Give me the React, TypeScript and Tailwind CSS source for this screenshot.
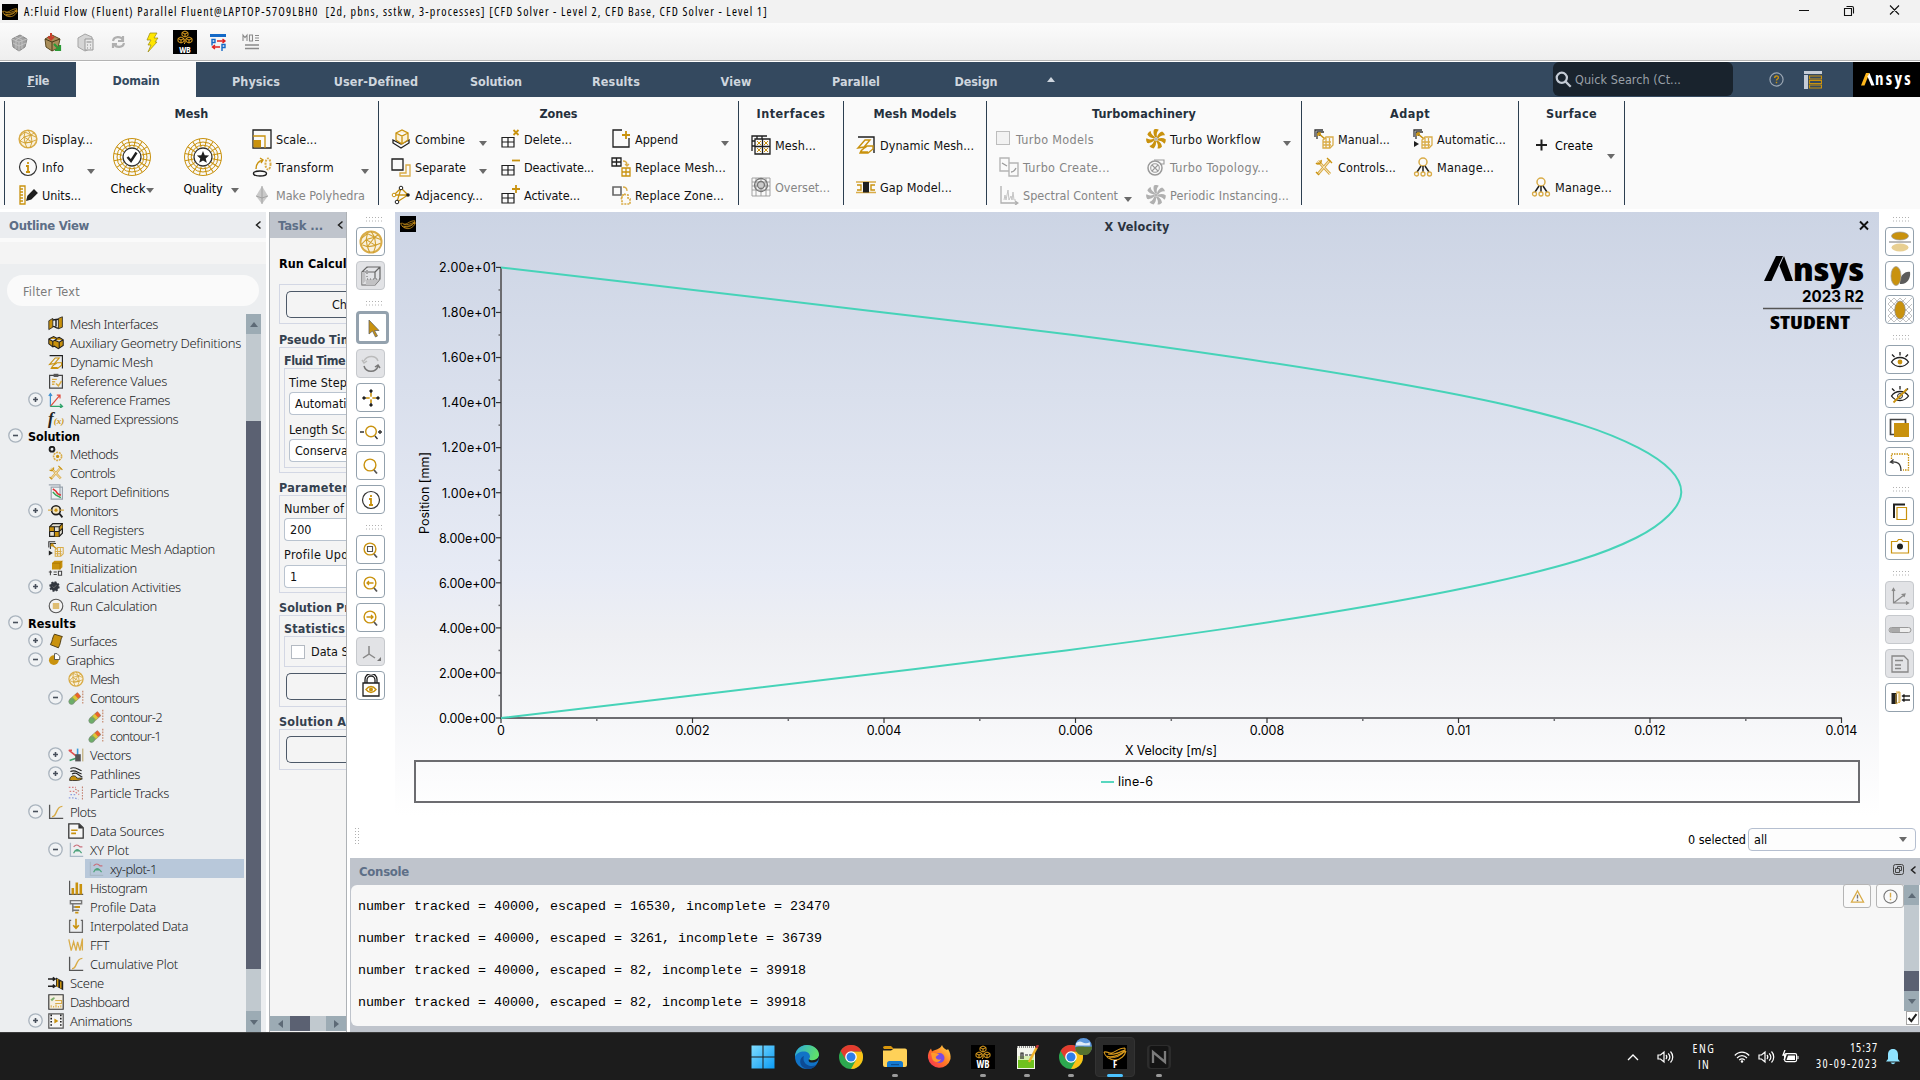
import React, { useLayoutEffect, useRef } from "react";

const G = "#c9920e";
const L = "#d9ac48";
const K = "#1f1f1f";

const fontUi = "font-['DejaVu_Sans_Condensed','DejaVu_Sans',sans-serif] [font-stretch:condensed]";

/* Text whose tracking is adjusted so that it spans a fixed width. */
function T({ children, w, className = "" }: { children: string; w?: number; className?: string }) {
  const ref = useRef<HTMLSpanElement>(null);
  useLayoutEffect(() => {
    const el = ref.current;
    if (!el || !w) return;
    el.style.letterSpacing = "0px";
    const natural = el.getBoundingClientRect().width;
    el.style.letterSpacing = (w - natural) / children.length + "px";
  }, [children, w]);
  return (
    <span ref={ref} className={"inline-block whitespace-pre " + className}>
      {children}
    </span>
  );
}

const P = (d: string, stroke = K, fill = "none", sw = 1.3) => (
  <path d={d} stroke={stroke} fill={fill} strokeWidth={sw} />
);

const grid4 = P("M2 8.500h12v9.500H2zM8 8.500v9.500M2 13h12", K, "none", 1.2);
const adaptMesh = (
  <>
    {P("M1 8V1h8M3 10V3h7M5 6h2", "#333", "none", 1.3)}
    {P("M4 4l7 6M4 4v3M4 4h3", G, "none", 1.6)}
    {P("M9 11l3-3h7v8l-3 3H9zM9 13h8M9 16h8M12 9v10M15.500 9v10", L, "none", 1.3)}
  </>
);
const meshBall = (
  <>
    <circle cx="10" cy="10" r="8.8" fill="#f9f1de" stroke={L} strokeWidth="1.6" />
    {P("M2 7l5-4 6 3 5 2M2 12l5 2 6-1 5-2M7 3l-1 5-4 4M6 8l7-2 1 7-7 1zM7 14l2 5M14 13l-2 6M6 8l8 5M13 6l3-2M10 1l3 5M7 14l6-8", "#d09f2c", "none", 0.9)}
  </>
);
const tools = (
  <>
    {P("M4 4l12 13M16 3L4 17", L, "none", 2.8)}
    {P("M4 4l12 13M16 3L4 17", "#fbf4e2", "none", 0.9)}
    {P("M2 6a3 3 0 0 0 5-3M13 1l5 5M2 15l3 3", G, "none", 1.4)}
  </>
);
const dynMesh = (
  <>
    {P("M2 2h16v16", K, "none", 1.4)}
    {P("M2 13l7-8h5l-6 7zM4 18c2-5 4-4 7-7h6v3l-5 4zM4 17h8", G, "none", 1.4)}
  </>
);
const contour = (
  <>
    {P("M4.500 14L14 5.500", "#8a8a8a", "none", 7.500)}
    {P("M5 13.500L9 10", "#8fb84a", "none", 6.500)}
    {P("M8 11L11 8", "#dcc638", "none", 6.500)}
    {P("M10.500 8.500L14 5.500", "#e8632c", "none", 6)}
    <circle cx="4.500" cy="14.500" r="3.500" fill="#6cae68" stroke="#7a8a7a" strokeWidth=".8" />
    <path d="M18.500 1v17" stroke="#c07a5a" strokeWidth="1.300" strokeDasharray="2 1.500" />
  </>
);
const xy = (
  <>
    {P("M3 1v17h16", "#a9b9c6", "none", 1.6)}
    {P("M7 6c3-3 5-3 8 0h3", "#c96f7b", "none", 1.5)}
    {P("M7 14c3-6 6-6 10 0M8 11h7", "#4fa37c", "none", 1.5)}
  </>
);
const curve = (
  <>
    {P("M2 1v17h17", "#555", "none", 1.6)}
    {P("M5 16c7 0 4-13 13-13", L, "none", 1.8)}
  </>
);
const manage = (
  <>
    <circle cx="10" cy="5" r="4" fill="none" stroke={L} strokeWidth="1.5" />
    {P("M8 9l-4 6M10 9v6M12 9l4 6", K, "none", 1.5)}
    <circle cx="3.500" cy="17" r="2" fill="none" stroke={L} strokeWidth="1.3" />
    <circle cx="10" cy="17" r="2" fill="none" stroke={L} strokeWidth="1.3" />
    <circle cx="16.500" cy="17" r="2" fill="none" stroke={L} strokeWidth="1.3" />
  </>
);
const fan = (c: string) => (
  <>
    {[0, 51, 103, 154, 206, 257, 309].map((a) => (
      <path key={a} d="M9.500 8.500C7.500 6 7 3 8 .5c2-.7 3.800-.5 4.800.3C10.500 3 10.500 6 11 8z" fill={c} transform={`rotate(${a} 10 10)`} />
    ))}
    <circle cx="10" cy="10" r="1.800" fill="#b5b5b5" />
  </>
);
const mag = (
  <>
    <circle cx="9" cy="9" r="5.900" fill="none" stroke={G} strokeWidth="1.4" />
    {P("M13 14l3 3.500", "#555", "none", 1.8)}
  </>
);
const info = (
  <>
    <circle cx="10" cy="10" r="8.500" fill="none" stroke="#333" strokeWidth="1.2" />
    {P("M8 9h2v6M8 15h4M10 5v2", G, "none", 1.8)}
  </>
);

const icons: Record<string, React.ReactNode> = {
  ball: meshBall,
  info,
  units: (
    <>
      {P("M2 1h5v18H2zM2 4h3M2 7h3M2 10h3M2 13h3M2 16h3", G)}
      {P("M9 15l1-4 6-6 3 3-6 6z", K, K)}
    </>
  ),
  scale: (
    <>
      {P("M1 1h18v18H1z", K)}
      {P("M1 7h12v12", G)}
      <path d="M1.500 11H9v7.500H1.500z" fill={G} />
    </>
  ),
  transform: (
    <>
      <ellipse cx="8" cy="16.500" rx="6.500" ry="2.500" fill="none" stroke={K} strokeWidth="1.4" />
      {P("M4 12c0-5 2-8 7-9M8 1l3 2-2 3", G, "none", 1.4)}
      <ellipse cx="16" cy="7" rx="2.500" ry="5.500" fill="none" stroke={L} strokeWidth="2" strokeDasharray="2 1" />
    </>
  ),
  poly: (
    <>
      <path d="M10 1l6 10-6 8-6-8z" fill="#c9c9c9" />
      {P("M10 1v18M4 11l6 2 6-2", "#999", "none", 0.8)}
    </>
  ),
  combine: (
    <>
      {P("M2 11l8 4 8-4v3l-8 5-8-5z", K)}
      {P("M5 4l6-3 6 3v7l-6 4-6-4zM5 4l6 3 6-3M11 7v8", G, "#fbf1d8")}
    </>
  ),
  separate: (
    <>
      {P("M1 2h11v11H1z", K)}
      {P("M15 8h4v11H9v-3h6z", L)}
    </>
  ),
  adjacency: (
    <>
      {P("M10 3L6 17M3 10h14M10 3l7 7-11 7M3 10l7-7", G)}
      <circle cx="10" cy="3" r="1.800" fill="#fff" stroke={K} />
      <circle cx="6" cy="17" r="1.800" fill="#fff" stroke={K} />
      <circle cx="17" cy="10" r="1.800" fill={K} />
      <circle cx="3" cy="10" r="1.800" fill="#fff" stroke={G} />
    </>
  ),
  del: <>{grid4}{P("M13.500 1l5 5M18.500 1l-5 5", G, "none", 1.8)}</>,
  deact: <>{grid4}{P("M12 3.500h8", G, "none", 1.8)}</>,
  act: <>{grid4}{P("M12 4h8M16 0v8", G, "none", 1.8)}</>,
  append: <>{P("M11 1H2v17h16V9", K)}{P("M11 6h8M15 2v8", G, "none", 1.8)}</>,
  repmesh: (
    <>
      {P("M1 1h9v8H1zM5.500 1v8M1 5h9", K)}
      {P("M11 11h8v8h-8zM11 15h8M15 11v8", G)}
      {P("M12 4c3 0 4 2 4 4M14 7l2 2 2-2", L)}
    </>
  ),
  repzone: (
    <>
      {P("M2 2h8v8H2z", "#666", "none", 1.6)}
      <path d="M10 12h2v-3l5 1v3l2 1v5h-8v-4z" fill="none" stroke={L} strokeWidth="1.7" strokeDasharray="2 1" />
      {P("M12 2c3 0 4 2 4 4", L)}
    </>
  ),
  imesh: (
    <>
      {P("M1 16V1h15M1 6h3M1 11h3M6 1v3M11 1v3M4 4h15v15H4zM11.500 4v15M4 11.500h15", K)}
      {P("M6 6l4 4M10 6l-4 4M13 6l4 4M17 6l-4 4M6 13l4 4M10 13l-4 4M13 13l4 4M17 13l-4 4", G, "none", 1)}
    </>
  ),
  overset: (
    <>
      {P("M1 1h18v18H1zM1 5h18M1 9h18M1 13h18M5 1v18M10 1v18M15 1v18", "#999", "none", 0.9)}
      <circle cx="10" cy="8" r="6.500" fill="none" stroke="#777" strokeWidth="1.3" />
      <circle cx="10" cy="8" r="3.500" fill="#ccc" stroke="#777" strokeWidth="1.3" />
    </>
  ),
  dyn: dynMesh,
  gap: (
    <>
      {P("M0 5h20M0 15.500h20", L, "none", 1.5)}
      {P("M1 8h4v5H1M19 8h-4v5h4", G, "none", 1.4)}
      <path d="M7 5h6v10.500H7z" fill={K} />
    </>
  ),
  tcreate: (
    <>
      {P("M1 1h9v13H1zM10 6h9v13h-9z", "#b5b5b5", "none", 1.4)}
      {P("M3 6l5 3M12 15c2 0 4-2 5-4", "#999")}
    </>
  ),
  spectral: <>{P("M2 1v17h17M16 16l3 2-3 2", "#b0b0b0")}{P("M5 15l1-5 1 5 2-10 1 10 2-4 1 4 1-8 1 8h2", "#c4c4c4", "none", 1)}</>,
  fan: fan(G),
  fanoff: fan("#b0b0b0"),
  topo: (
    <>
      <circle cx="9" cy="11" r="7" fill="none" stroke="#999" strokeWidth="1.5" />
      <circle cx="9" cy="11" r="4.300" fill="none" stroke="#999" strokeWidth="1.1" />
      {P("M6 8l6 6M12 8l-6 6M8 3h10v4h-4", "#999", "none", 1.1)}
    </>
  ),
  manual: adaptMesh,
  auto: <>{adaptMesh}<path d="M1 12l5 3-5 3z" fill={K} /></>,
  tools,
  manage,
  plus: P("M5 10h11M10.500 4.500v11", K, "none", 2),
  mi: (
    <>
      <path d="M1 6l5-3v11l-5 3zM13 3l5-2v13l-5 2z" fill={G} stroke={K} />
      {P("M6 5c4 0 4-1 7-1M6 13c4 0 4 3 7 2M10 5v8", K, "#8b6a1f", 1.8)}
    </>
  ),
  aux: <path d="M1 5l6-3 4 2 3-1 5 3v7l-6 4-5-3-2 1-5-4zM1 5l5 3 5-3M6 8v7M9 7l5 2 5-3M14 9v8" fill={G} stroke={K} strokeWidth="1.3" />,
  refv: (
    <>
      {P("M2 3h16v16H2z", "#444", "none", 1.5)}
      <path d="M7 1h6v4H7z" fill="#555" />
      {P("M5 8h6M5 11h4M5 14h3M10 13l3 3 4-6", L, "none", 1.8)}
    </>
  ),
  frames: (
    <>
      {P("M3 18V2M1 5l2-3 2 3", "#3b8fd0", "none", 1.5)}
      {P("M3 18L15 4M11 4h4v4", "#e04b3c", "none", 1.5)}
      {P("M3 18h15M15 15l3 3-3 2", "#2fa36a", "none", 1.7)}
    </>
  ),
  methods: (
    <>
      <circle cx="5" cy="4" r="3" fill="none" stroke={K} strokeWidth="2.4" />
      <circle cx="12" cy="13" r="5" fill="none" stroke={L} strokeWidth="2" strokeDasharray="2.500 1" />
      <circle cx="12" cy="13" r="2" fill={G} />
    </>
  ),
  report: (
    <>
      {P("M1 1h14v14M4 4h14v15H4z", "#9aa4ae", "#eef2f4", 1.5)}
      {P("M6 6l4 3 2 3 4 2", "#e03030", "none", 2)}
      {P("M6 10l4 4 6 3", "#35a355", "none", 1.8)}
    </>
  ),
  monitors: (
    <>
      <circle cx="10" cy="9" r="5.500" fill="#f3e6c4" stroke={K} strokeWidth="2" />
      {P("M14 13l4 5", K, "none", 2.2)}
      {P("M0 9h5M15 9h5", L, "none", 1.5)}
      <circle cx="10" cy="9" r="2" fill={G} />
    </>
  ),
  cells: (
    <>
      <path d="M2 6l4-4h12v12l-4 4H2z" fill="#e4e0d2" stroke={K} strokeWidth="1.5" />
      <path d="M2 6h6v6H2zM8 12h6v6H8zM14 6l4-4v6l-4 4z" fill={G} />
      {P("M2 6h12v12M14 6l4-4M8 6v12M2 12h12l4-4", K)}
    </>
  ),
  init: (
    <>
      <path d="M5 4l3-3h10v8l-3 3H5z" fill={G} />
      {P("M5 4h10v8M15 4l3-3", "#a87400", "none", 1)}
      {P("M3 13v6M1 15h4M7 15h4M7 18h4M13 14h4v5h-4z", "#444")}
    </>
  ),
  gear: (
    <>
      <circle cx="10" cy="10" r="6.500" fill="#333840" stroke="#333840" strokeWidth="3" strokeDasharray="3 2" />
      {P("M7 10l2 2 4-4", "#777")}
    </>
  ),
  run: (
    <>
      <circle cx="10" cy="10" r="8.500" fill="#f3f3f3" stroke="#555" strokeWidth="1.4" />
      {P("M6 7.500h8M6 10h8M6 12.500h8", L, "none", 1.7)}
    </>
  ),
  surf: <path d="M8 1.500l10 3c-3 4-1 6-5 14l-10-4c3-5 2-8 5-13z" fill={G} stroke="#4c3a10" strokeWidth="1.2" />,
  graphics: (
    <>
      <circle cx="9" cy="11" r="7.500" fill={G} />
      <path d="M10 1h4l4 4v5h-8z" fill="#fff" stroke="#444" strokeWidth="1.3" />
    </>
  ),
  contour,
  vectors: (
    <>
      {P("M1 4l9 7M1 4l4 0", "#e05050", "none", 2)}
      {P("M12 11V2", "#3b9ad8", "none", 2)}
      {P("M2 17l8-3", "#3fa36a", "none", 2)}
      <path d="M9 9h7v9H9z" fill="#555" />
      {P("M18.500 2v16", "#b39a5a", "none", 1.2)}
    </>
  ),
  paths: (
    <>
      {P("M3 3c6-3 8 1 14 3M3 7c6-3 8 1 14 3M5 10c6-3 7 1 13 4", K, "none", 1.4)}
      <path d="M2 18c0-7 8-7 9-3 2 1 5-1 7 1-4 3-12 2-16 2z" fill={G} stroke={K} />
    </>
  ),
  tracks: (
    <>
      <path d="M1 3h9M2 8h6l6 4" fill="none" stroke="#d98080" strokeWidth="1.6" strokeDasharray="2 2" />
      <path d="M1 16h7l5 2M3 12h8" fill="none" stroke="#8f9fe0" strokeWidth="1.6" strokeDasharray="2 2" />
      <path d="M9 5l5 3M18 2v16" stroke="#c07a6a" strokeWidth="1.300" strokeDasharray="2 1.500" />
    </>
  ),
  curve,
  data: (
    <>
      {P("M1 1h13l5 5v13H1z", "#333", "#f6f6f6", 1.6)}
      <path d="M13 1l6 6h-6z" fill="#333" />
      {P("M4 9h8M4 13h6", G, "none", 2)}
    </>
  ),
  xy,
  hist: (
    <>
      {P("M2 1v17h17", "#555", "none", 1.5)}
      {P("M6 18v-8M11 18V3M16 18V5", G, "none", 3.2)}
    </>
  ),
  profile: (
    <>
      {P("M3 2h14v4H3zM6 6v10M6 10h8M6 14h8", "#777", "none", 1.8)}
      {P("M9 10h6M9 17h4", G, "none", 2.4)}
    </>
  ),
  interp: (
    <>
      {P("M4 3H2v15h16V3h-2", "#666", "none", 1.6)}
      {P("M10 1v11M6.500 9l3.500 4 3.500-4", G, "none", 2)}
    </>
  ),
  fft: P("M1 3l3 14 3-11 3 11 2-11 3 11 3-15v15", L, "none", 1.6),
  scene: (
    <>
      {P("M0 5h8M6 3l3 2-3 2M0 14h8M6 12l3 2-3 2", K, "none", 1.7)}
      <path d="M10 3l9 5v11l-9-5z" fill={K} />
      {P("M12 5v10M16 8v9", G, "none", 2)}
    </>
  ),
  dash: (
    <>
      {P("M1 1h18v18H1z", "#333", "#f4efe2", 1.4)}
      <path d="M3 7l4-3 2 1-4 4z" fill="#7fb06a" />
      {P("M4 17v-3M7 17v-2M10 17v-4M13 17v-2M16 17v-3M9 8h8v4H9", L)}
    </>
  ),
  anim: (
    <>
      {P("M1 1h18v18H1z", "#555", "#f6f6f6", 1.5)}
      <path d="M4 2v16M16 2v16" stroke={K} strokeWidth="2" strokeDasharray="2 2" />
      <path d="M8 7l5 3-5 3z" fill={G} />
    </>
  ),
};

function Ico({ n, s = 20 }: { n: string; s?: number }) {
  return (
    <svg viewBox="0 0 20 20" width={s} height={s} className="shrink-0">
      {icons[n]}
    </svg>
  );
}

const Fx = () => (
  <span className="flex w-4 items-baseline text-[17px] leading-none italic font-bold font-['Liberation_Serif',serif] text-[#222]">
    f<span className="text-[9px] text-[#c9920e]">(x)</span>
  </span>
);

function Arrow({ className = "" }: { className?: string }) {
  return (
    <svg viewBox="0 0 8 5" width="8" height="5" className={"shrink-0 " + className}>
      <path d="M0 0h8L4 5z" fill="#6a6a6a" />
    </svg>
  );
}

function Item({ i, t, w, off, arrow }: { i: string; t: string; w: number; off?: boolean; arrow?: boolean }) {
  return (
    <div className={"flex h-7 items-center gap-1 pr-1.5" + (off ? " text-[#858585]" : " text-[#111]")}>
      <Ico n={i} />
      <T w={w}>{t}</T>
      {arrow && <Arrow className="ml-auto mt-2" />}
    </div>
  );
}

function Group({ title, tw, cls, children }: { title: string; tw: number; cls: string; children: React.ReactNode }) {
  return (
    <div className={"flex h-[104px] shrink-0 flex-col border-l border-[#2c3e50] " + cls}>
      <div className="flex h-6 shrink-0 items-center justify-center font-bold text-[#25303c]">
        <T w={tw}>{title}</T>
      </div>
      <div className="flex">{children}</div>
    </div>
  );
}

function Wheel({ star }: { star?: boolean }) {
  return (
    <svg viewBox="0 0 40 40" width="40" height="40" className="shrink-0">
      <g fill="none" stroke={G} strokeWidth="1">
        <circle cx="20" cy="20" r="18.500" />
        <circle cx="20" cy="20" r="15" />
        <circle cx="20" cy="20" r="11.800" />
        {Array.from({ length: 16 }, (_, k) => (
          <path key={k} d="M20 10.500V1.500" transform={`rotate(${k * 22.5 + 11} 20 20)`} />
        ))}
      </g>
      <circle cx="20" cy="20" r="9" fill="#fff" stroke="#333" strokeWidth="1.300" />
      {star ? (
        <path d="M20 14l1.700 4.200 4.400.3-3.400 2.900 1.100 4.400-3.800-2.400-3.800 2.400 1.100-4.400-3.400-2.900 4.400-.3z" fill={K} />
      ) : (
        <path d="M15.500 20l3.500 4 5.500-8.500" fill="none" stroke={K} strokeWidth="2.400" />
      )}
    </svg>
  );
}

function Swirl({ s, f }: { s: number; f?: boolean }) {
  return (
    <svg viewBox="0 0 24 24" width={s} height={s} className="bg-black shrink-0">
      <g fill="none" stroke="#d99a1c" strokeWidth="1.100" transform={f ? "translate(0 0)" : "translate(0 4)"}>
        <path d="M1 7c4-1 5 2 8 1s7-5 13-5M1 7c1 5 6 8 11 8 6 0 10-5 11-9M3 11c6 2 12 0 19-5M5 9c6 1 10-1 17-4M6 13c5 0 11-1 16-7M22 3v5" />
      </g>
    </svg>
  );
}

function Cubes() {
  return (
    <g fill="none" stroke="#e2a11f" strokeWidth="1">
      <path d="M12 1l3 1.500v3L12 7 9 5.500v-3zM9 2.500L12 4l3-1.500M12 4v3M8 7l3 1.500v3L8 13l-3-1.500v-3zM5 8.500L8 10l3-1.500M8 10v3M16 7l3 1.500v3L16 13l-3-1.500v-3zM13 8.500l3 1.500 3-1.500M16 10v3M12 9v4l-1 1" />
    </g>
  );
}

function TopBar() {
  return (
    <>
      <div className="flex h-[23px] items-center bg-[#f2f2f2] pl-0.5 text-[12px] text-black font-['Open_Sans','Noto_Sans',sans-serif]">
        <Swirl s={16} />
        <T w={744} className="ml-1.5 mt-px">A:Fluid Flow (Fluent) Parallel Fluent@LAPTOP-57O9LBH0  [2d, pbns, sstkw, 3-processes] [CFD Solver - Level 2, CFD Base, CFD Solver - Level 1]</T>
        <svg viewBox="0 0 110 12" width="110" height="12" className="-mt-1 ml-auto mr-[15px]" fill="none" stroke="#111" strokeWidth="1.100">
          <path d="M4 6.500h10M49.500 4.500h7v7h-7zM51.500 2.500h5.500q1.500 0 1.500 1.500v5.500M95 1.500l9 9M104 1.500l-9 9" />
        </svg>
      </div>
      <div className="flex h-[39px] items-center gap-[9px] border-b border-white bg-gradient-to-b from-[#fbfbfb] to-[#eeeeee] pl-[8px] shadow-[inset_0_-1px_0_#b4b4b4]">
        <svg viewBox="0 0 24 24" width="24" height="24">
          <path d="M4 9l8-4 7 4-2 8-6 4-6-4z" fill="#a2a2a2" stroke="#888" />
          <path d="M4 9l7 3 8-3M11 12v9M7 7l7 3v9M15 6l-7 4v9M5 13l6 3 7-3" stroke="#c9c9c9" strokeWidth=".8" fill="none" />
        </svg>
        <svg viewBox="0 0 24 24" width="24" height="24">
          <path d="M4 9l7-4 8 4-2 9-6 3-6-4z" fill="#a98e5a" stroke="#5c4a22" />
          <path d="M4 9l7 3 8-3M11 12v9" stroke="#4b3b18" fill="none" />
          <path d="M10 3v6M7 6.500l3 3 3-3" stroke="#c8402c" strokeWidth="2" fill="none" />
          <path d="M13 14l5 5M19 15v5h-5" stroke="#2b9a35" strokeWidth="2.200" fill="none" />
        </svg>
        <svg viewBox="0 0 24 24" width="24" height="24">
          <path d="M4 8l7-4 7 3v11l-7 3-7-4z" fill="#d5d5d5" stroke="#a5a5a5" />
          <path d="M11 9h8v11h-8z" fill="#e8e8e8" stroke="#999" />
          <path d="M12.500 12h5M13 15h1M16 15h1M13 18h1M16 18h1" stroke="#888" />
        </svg>
        <svg viewBox="0 0 24 24" width="24" height="24" fill="none" stroke="#b0b0b0" strokeWidth="2.200">
          <path d="M6 11c1-5 8-5 10-1M16 6v5h-5M17 13c-1 5-8 5-10 1M6 18v-4h4" />
        </svg>
        <svg viewBox="0 0 24 24" width="24" height="24">
          <path d="M10 3h7l-3 5h4l-3 4h2l-9 10 3-7H8l3-5H7z" fill="#ffe600" stroke="#9a8a10" strokeWidth=".7" />
        </svg>
        <div className="flex h-6 w-6 flex-col items-center bg-black">
          <svg viewBox="2 0 20 15" width="22" height="15"><Cubes /></svg>
          <span className="text-[9px] font-bold leading-[9px] text-white font-['Open_Sans',sans-serif]">WB</span>
        </div>
        <svg viewBox="0 0 24 24" width="24" height="24">
          <path d="M4 4h16v3H4z" fill="#1469c7" />
          <path d="M6 15.500V9.500h3v3H6M16 21v-6.500h3v3h-3" stroke="#1469c7" strokeWidth="1.400" fill="none" />
          <path d="M11 11h8M16.500 9l2.500 2-2.500 2M14 17H7M9 15l-2.500 2L9 19" stroke="#e02020" strokeWidth="1.400" fill="none" />
        </svg>
        <svg viewBox="0 0 24 24" width="24" height="24" fill="none" stroke="#8a8a8a" strokeWidth="1.100">
          <path d="M4 11V5l2 2.500L8 5v6M10.500 5h3v6h-3zM16 5.500h4M16 8h4M16 10.500h4" />
          <path d="M6 15h14M6 18.500h14" strokeWidth="1.700" />
        </svg>
      </div>
    </>
  );
}

function Tabs() {
  const tabs: [string, number][] = [["Physics", 48], ["User-Defined", 84], ["Solution", 52], ["Results", 48], ["View", 31], ["Parallel", 48], ["Design", 43]];
  return (
    <div className="flex h-[35px] bg-[#34495f] text-[12.500px] font-bold text-[#cfd6de]">
      <div className="flex w-[76px] items-center justify-center pt-px">
        <span className="flex"><span className="underline">F</span><T w={14}>ile</T></span>
      </div>
      <div className="flex w-[120px] items-center justify-center bg-[#fafafa] pt-px text-[#34495f]"><T w={47}>Domain</T></div>
      {tabs.map(([t, w]) => (
        <div key={t} className="flex w-[120px] items-center justify-center pt-[3px]"><T w={w}>{t}</T></div>
      ))}
      <svg viewBox="0 0 8 5" width="8" height="5" className="ml-[11px] mt-[15px]"><path d="M0 5h8L4 0z" fill="#cfd6de" /></svg>
      <div className="ml-auto flex h-[34px] w-[180px] items-center gap-[3px] rounded-md bg-[#19232d] pl-0.5 font-normal text-[#99a0a8]">
        <svg viewBox="0 0 20 20" width="17" height="17" fill="none" stroke="#c5ccd6" strokeWidth="2.600"><circle cx="8" cy="8" r="6" /><path d="M12.500 12.500l6 6" /></svg>
        <T w={106} className="mt-px">Quick Search (Ct...</T>
      </div>
      <div className="flex w-[120px] items-center pl-[36px]">
        <svg viewBox="0 0 16 16" width="15" height="15"><circle cx="8" cy="8" r="7" fill="none" stroke="#9aa6b3" strokeWidth="1.300" /><path d="M6 6.500c0-3 4-3 4-.5 0 1.500-2 1.500-2 3M8 10.500v1.500" stroke={G} strokeWidth="1.500" fill="none" /></svg>
        <svg viewBox="0 0 18 18" width="18" height="18" className="ml-[20px]" fill="none"><path d="M0 1.500h18" stroke="#c5ccd6" strokeWidth="3" /><path d="M2 4v14" stroke="#c5ccd6" strokeWidth="4" /><path d="M5.500 5h12v3h-12zM5.500 9.500h12v3h-12zM5.500 14h12v3h-12z" stroke={G} strokeWidth="1.200" /></svg>
      </div>
      <div className="flex w-[67px] items-center bg-black pl-2">
        <svg viewBox="0 0 14 13" width="14" height="13"><path d="M0 12.500L5 0h3.500L3.500 12.500z" fill="#ffb71b" /><path d="M6.500 3.500L8.500 0l5 12.500h-3.200z" fill="#fff" /></svg>
        <T w={38} className="-mt-0.5 text-[17px] font-bold leading-none text-white font-['Open_Sans',sans-serif]">nsys</T>
      </div>
    </div>
  );
}

function Ribbon() {
  return (
    <div className="flex h-[112px] bg-[#fafafa] pl-1 pt-1 text-[12.500px]">
      <Group title="Mesh" tw={34} cls="w-[374px]">
        <div className="w-[96px] pl-[13px]">
          <Item i="ball" t="Display..." w={51} />
          <Item i="info" t="Info" w={22} arrow />
          <Item i="units" t="Units..." w={39} />
        </div>
        <div className="flex w-[62px] flex-col items-center pt-3">
          <Wheel />
          <div className="mt-1 flex items-center"><T w={35}>Check</T><Arrow className="mt-1" /></div>
        </div>
        <div className="flex w-[80px] flex-col items-center pt-3">
          <Wheel star />
          <div className="mt-1 flex items-center gap-[8px] pl-4"><T w={39}>Quality</T><Arrow className="mt-1" /></div>
        </div>
        <div className="w-[132px] pl-[9px]">
          <Item i="scale" t="Scale..." w={41} />
          <Item i="transform" t="Transform" w={58} arrow />
          <Item i="poly" t="Make Polyhedra" w={89} off />
        </div>
      </Group>
      <Group title="Zones" tw={38} cls="w-[360px]">
        <div className="w-[114px] pl-[12px]">
          <Item i="combine" t="Combine" w={50} arrow />
          <Item i="separate" t="Separate" w={51} arrow />
          <Item i="adjacency" t="Adjacency..." w={68} />
        </div>
        <div className="w-[110px] pl-[7px]">
          <Item i="del" t="Delete..." w={48} />
          <Item i="deact" t="Deactivate..." w={70} />
          <Item i="act" t="Activate..." w={56} />
        </div>
        <div className="w-[132px] pl-[8px]">
          <Item i="append" t="Append" w={43} arrow />
          <Item i="repmesh" t="Replace Mesh..." w={91} />
          <Item i="repzone" t="Replace Zone..." w={89} />
        </div>
      </Group>
      <Group title="Interfaces" tw={69} cls="w-[105px]">
        <div className="flex flex-col gap-[14px] pl-[12px] pt-1.5">
          <Item i="imesh" t="Mesh..." w={41} />
          <Item i="overset" t="Overset..." w={55} off />
        </div>
      </Group>
      <Group title="Mesh Models" tw={83} cls="w-[143px]">
        <div className="flex flex-col gap-[14px] pl-[12px] pt-1.5">
          <Item i="dyn" t="Dynamic Mesh..." w={94} />
          <Item i="gap" t="Gap Model..." w={72} />
        </div>
      </Group>
      <Group title="Turbomachinery" tw={104} cls="w-[315px]">
        <div className="w-[151px] pl-[9px]">
          <div className="flex h-7 items-center gap-[6px] text-[#858585]">
            <div className="-mt-0.5 h-3.5 w-3.5 border border-[#bdbdbd] bg-[#f2f2f2]" />
            <T w={78}>Turbo Models</T>
          </div>
          <div className="pl-[3px]">
            <Item i="tcreate" t="Turbo Create..." w={87} off />
            <Item i="spectral" t="Spectral Content" w={95} off arrow />
          </div>
        </div>
        <div className="w-[159px] pl-[8px]">
          <Item i="fan" t="Turbo Workflow" w={91} arrow />
          <Item i="topo" t="Turbo Topology..." w={99} off />
          <Item i="fanoff" t="Periodic Instancing..." w={119} off />
        </div>
      </Group>
      <Group title="Adapt" tw={40} cls="w-[217px]">
        <div className="w-[99px] pl-[12px]">
          <Item i="manual" t="Manual..." w={52} />
          <Item i="tools" t="Controls..." w={58} />
        </div>
        <div className="pl-[12px]">
          <Item i="auto" t="Automatic..." w={69} />
          <Item i="manage" t="Manage..." w={57} />
        </div>
      </Group>
      <Group title="Surface" tw={51} cls="w-[107px] border-r">
        <div className="flex w-full flex-col gap-[14px] pl-[12px] pt-1.5">
          <div className="flex h-7 items-center gap-1">
            <Ico n="plus" />
            <T w={38}>Create</T>
            <Arrow className="ml-auto mr-[9px] mt-[22px]" />
          </div>
          <Item i="manage" t="Manage..." w={57} />
        </div>
      </Group>
    </div>
  );
}

type Row = [number, string, number, string, string?];
const rows: Row[] = [
  [1, "Mesh Interfaces", 88, "mi"],
  [1, "Auxiliary Geometry Definitions", 171, "aux"],
  [1, "Dynamic Mesh", 83, "dyn"],
  [1, "Reference Values", 97, "refv"],
  [1, "Reference Frames", 100, "frames", "+"],
  [1, "Named Expressions", 108, "fx"],
  [0, "Solution", 52, "", "-"],
  [1, "Methods", 48, "methods"],
  [1, "Controls", 45, "tools"],
  [1, "Report Definitions", 99, "report"],
  [1, "Monitors", 48, "monitors", "+"],
  [1, "Cell Registers", 74, "cells"],
  [1, "Automatic Mesh Adaption", 145, "auto"],
  [1, "Initialization", 67, "init"],
  [1, "Calculation Activities", 115, "gear", "+"],
  [1, "Run Calculation", 87, "run"],
  [0, "Results", 48, "", "-"],
  [1, "Surfaces", 47, "surf", "+"],
  [1, "Graphics", 48, "graphics", "-"],
  [2, "Mesh", 29, "ball"],
  [2, "Contours", 49, "contour", "-"],
  [3, "contour-2", 52, "contour"],
  [3, "contour-1", 51, "contour"],
  [2, "Vectors", 41, "vectors", "+"],
  [2, "Pathlines", 50, "paths", "+"],
  [2, "Particle Tracks", 79, "tracks"],
  [1, "Plots", 26, "curve", "-"],
  [2, "Data Sources", 74, "data"],
  [2, "XY Plot", 39, "xy", "-"],
  [3, "xy-plot-1", 47, "xy"],
  [2, "Histogram", 57, "hist"],
  [2, "Profile Data", 66, "profile"],
  [2, "Interpolated Data", 98, "interp"],
  [2, "FFT", 19, "fft"],
  [2, "Cumulative Plot", 88, "curve"],
  [1, "Scene", 34, "scene"],
  [1, "Dashboard", 59, "dash"],
  [1, "Animations", 62, "anim", "+"],
];

function Expander({ v }: { v?: string }) {
  if (!v) return <span className="w-[15px]" />;
  return (
    <svg viewBox="0 0 15 15" width="15" height="15" className="-mt-[3px] shrink-0">
      <circle cx="7.500" cy="7.500" r="6.700" fill="#f0f2f4" stroke="#a9b3bd" strokeWidth="1.300" />
      <path d={v === "+" ? "M5 7.500h5M7.500 5v5" : "M5 7.500h5"} stroke="#49505c" strokeWidth="1.600" />
    </svg>
  );
}

const Tri = ({ d }: { d: string }) => (
  <svg viewBox="0 0 10 10" width="10" height="10"><path d={d} fill="#5d6a76" /></svg>
);
const UP = "M1 8h8L5 3z";
const DOWN = "M1 3h8L5 8z";
const LEFT = "M8 1v8L3 5z";
const RIGHT = "M3 1v8l5-4z";

function Outline() {
  const indent = ["pl-[8px]", "pl-[28px]", "pl-[48px]", "pl-[68px]"];
  return (
    <div className="flex w-[266px] shrink-0 flex-col bg-[#eceef0]">
      <div className="flex h-[26px] items-center justify-between bg-[#ebedf0] pl-[9px] pr-[4px] text-[13px] font-bold text-[#5d6f87]">
        <T w={80} className="mt-px">Outline View</T>
        <Chevron />
      </div>
      <div className="h-1 bg-[#fafafa]" />
      <div className="h-[22px] bg-[#f4f4f4]" />
      <div className="mx-[7px] mt-[11px] flex h-[31px] items-center rounded-full bg-[#fafafa] pl-4 pt-0.5 text-[12.500px] text-[#7b7b7b]">
        <T w={57}>Filter Text</T>
      </div>
      <div className="mt-2 flex h-[718px] overflow-hidden">
        <div className="w-[246px] pt-px text-[13px] text-[#1c1c24] font-['Noto_Sans','Noto_Sans_CJK_KR',sans-serif] font-light">
          {rows.map(([lv, t, w, ic, ex]) =>
            lv === 0 ? (
              <div key={t} className="flex h-4 items-center gap-[5px] pl-[8px] font-bold text-black">
                <Expander v={ex} />
                <T w={w} className="-mt-px text-[12.500px] font-['DejaVu_Sans_Condensed','DejaVu_Sans',sans-serif]">{t}</T>
              </div>
            ) : (
              <div key={t} className={"relative flex h-[19px] items-center " + indent[lv]}>
                {t === "xy-plot-1" && <div className="absolute left-[85px] -top-px h-[19px] w-[159px] bg-[#b8c8da]" />}
                <Expander v={ex} />
                <span className={"relative -mt-0.5 ml-[5px] flex shrink-0 items-center " + (ic === "gear" || ic === "graphics" ? "w-[18px]" : "w-[22px]")}>
                  {ic === "fx" ? <Fx /> : <Ico n={ic} s={ic === "gear" || ic === "graphics" ? 13 : 16} />}
                </span>
                <T w={w} className="relative">{t}</T>
              </div>
            )
          )}
        </div>
        <div className="flex w-[15px] flex-col bg-[#c1c9cf]">
          <div className="flex h-5 items-center justify-center bg-[#9cabb4]"><Tri d={UP} /></div>
          <div className="mt-[87px] h-[548px] bg-[#5b6172]" />
          <div className="mt-auto flex h-[21px] items-center justify-center bg-[#9cabb4]"><Tri d={DOWN} /></div>
        </div>
      </div>
    </div>
  );
}

function Chevron() {
  return <svg viewBox="0 0 8 10" width="8" height="10" fill="none" stroke="#222" strokeWidth="1.500"><path d="M6.500 1.500L2.500 5l4 3.500" /></svg>;
}

const bx = "border-l border-t border-b border-[#d3d7e4]";
const fld = "flex items-center rounded-l-[4px] border border-r-0 border-[#b9c3cf] bg-white pl-[5px]";

function TaskPane() {
  return (
    <div className="ml-[3px] flex w-[78px] shrink-0 flex-col overflow-hidden border-x border-[#aeb2b6] bg-[#f4f4f4] text-[12.500px] whitespace-nowrap text-[#111]">
      <div className="flex h-[26px] shrink-0 items-center justify-between bg-[#bfc4cc] pl-[8px] pr-[2px] text-[13px] font-bold text-[#5d6f87]">
        <T w={45} className="mt-px">Task ...</T>
        <Chevron />
      </div>
      <div className="flex h-[778px] flex-col pl-[9px]">
        <div className="mt-[16px] flex h-[18px] items-center font-bold text-black"><T w={81}>Run Calculat</T></div>
        <div className={"mt-[12px] h-[40px] shrink-0 pl-[6px] pt-[6px] " + bx}>
          <div className="flex h-[27px] items-center rounded-l-[5px] border border-r-0 border-[#4d5968] pl-[45px]">Che</div>
        </div>
        <div className="flex h-[23px] shrink-0 items-end font-bold text-[#34414f]"><T w={81}>Pseudo Time</T></div>
        <div className={"h-[126px] shrink-0 pl-[4px] " + bx}>
          <div className="flex h-[20px] items-center pt-[4px] font-bold text-[#34414f]"><T w={61}>Fluid Time</T></div>
          <div className={"h-[100px] pl-[4px] pt-[4px] " + bx}>
            <div className="flex h-[19px] items-center"><T w={58}>Time Step</T></div>
            <div className={"h-[23px] " + fld}>Automatic</div>
            <div className="mt-[5px] flex h-[19px] items-center"><T w={73}>Length Scale</T></div>
            <div className={"h-[23px] " + fld}>Conservat</div>
          </div>
        </div>
        <div className="mt-[6px] flex h-[16px] shrink-0 items-center font-bold text-[#34414f]"><T w={76}>Parameters</T></div>
        <div className={"h-[98px] shrink-0 pl-[4px] " + bx}>
          <div className="flex h-[22px] items-center pt-[3px]"><T w={60}>Number of</T></div>
          <div className={"h-[23px] " + fld}>200</div>
          <div className="flex h-[24px] items-center pt-[3px]"><T w={84}>Profile Update</T></div>
          <div className={"h-[23px] " + fld}>1</div>
        </div>
        <div className="mt-[6px] flex h-[16px] shrink-0 items-center font-bold text-[#34414f]"><T w={93}>Solution Proce</T></div>
        <div className={"h-[92px] shrink-0 pl-[4px] " + bx}>
          <div className="flex h-[20px] items-center pt-[4px] font-bold text-[#34414f]"><T w={61}>Statistics</T></div>
          <div className={"flex h-[31px] items-center gap-[6px] pl-[6px] " + bx}>
            <div className="h-3.5 w-3.5 shrink-0 border border-[#b4bac2] bg-white" />
            Data Sam
          </div>
          <div className="ml-[2px] mt-[6px] h-[27px] rounded-l-[5px] border border-r-0 border-[#4d5968]" />
        </div>
        <div className="mt-[6px] flex h-[16px] shrink-0 items-center font-bold text-[#34414f]"><T w={83}>Solution Adv</T></div>
        <div className={"h-[41px] shrink-0 pl-[6px] pt-[6px] " + bx}>
          <div className="h-[27px] rounded-l-[5px] border border-r-0 border-[#4d5968]" />
        </div>
      </div>
      <div className="flex h-[15px] shrink-0 bg-[#c1c9cf]">
        <div className="flex w-5 items-center justify-center bg-[#9cabb4]"><Tri d={LEFT} /></div>
        <div className="w-5 bg-[#5b6172]" />
        <div className="ml-auto flex w-5 items-center justify-center bg-[#9cabb4]"><Tri d={RIGHT} /></div>
      </div>
    </div>
  );
}

function Dots() {
  return (
    <svg viewBox="0 0 18 5" width="18" height="5" className="shrink-0">
      {[0, 3, 6, 9, 12, 15].map((x) => (
        <path key={x} d={`M${x + 1} .500h1M${x + 1} 4h1`} stroke="#b0b0b0" />
      ))}
    </svg>
  );
}

function Btn({ children, off, sel }: { children: React.ReactNode; off?: boolean; sel?: boolean }) {
  const c = sel
    ? "h-[33px] w-[33px] border-[3px] border-[#94a2ae] bg-white -mr-1"
    : off
      ? "h-[29px] w-[29px] border border-[#c6c9cd] bg-[#e2e3e6]"
      : "h-[29px] w-[29px] border border-[#93a1ad] bg-white";
  return (
    <div className={"flex shrink-0 items-center justify-center rounded-[4px] " + c}>
      <svg viewBox="0 0 24 24" width="24" height="24" fill="none" className="shrink-0">{children}</svg>
    </div>
  );
}

const c20 = (n: React.ReactNode) => <g transform="translate(2 2)">{n}</g>;

function LeftTools() {
  return (
    <div className="flex w-[48px] shrink-0 flex-col items-start bg-white pl-[9px] pt-[5px]">
      <div className="pl-[9px]"><Dots /></div>
      <div className="flex flex-col gap-[5px] pt-[5px]">
        <Btn><g transform="translate(0 0) scale(1.200)">{meshBall}</g></Btn>
        <Btn off><path d="M3 8l5-5h13v12l-5 6H3zM3 8h13M16 8v13M16 8l5-5" stroke="#666" strokeWidth="1.200" /><path d="M3 8v13h4l-1-13zM3 21l5-6h13l-5 6z" fill="#c2c2c4" /><path d="M8 3v12h13" stroke="#666" strokeDasharray="1 2" /></Btn>
      </div>
      <div className="pl-[9px] pt-[11px]"><Dots /></div>
      <div className="flex flex-col gap-[5px] pt-[5px]">
        <Btn sel><path d="M8 4v14l3.500-3 3 6 2-1-3-5.500H18z" fill={G} stroke="#666" strokeWidth=".8" /></Btn>
        <Btn off><path d="M5 9c3-6 12-6 14 0M3 8l2 3 3-2" stroke="#bbb" strokeWidth="1.500" /><path d="M5 14c2 7 12 7 14 0M16 15l3-2 2 3" stroke="#777" strokeWidth="1.500" /></Btn>
        <Btn><path d="M12 7v10M7 12h10" stroke={G} strokeWidth="1.600" /><path d="M12 4v3M12 17v3M4 12h3M17 12h3M10.500 5.500L12 4l1.500 1.500M10.500 18.500L12 20l1.500-1.500M5.500 10.500L4 12l1.500 1.500M18.500 10.500L20 12l-1.500 1.500" stroke={K} strokeWidth="1.500" /><circle cx="12" cy="12" r="1.500" fill="#fff" /></Btn>
        <Btn><circle cx="12" cy="11.500" r="5.300" stroke={G} strokeWidth="1.400" /><path d="M16 16l2.500 3M1 12h4M19 12h4M21 10v4" stroke="#333" strokeWidth="1.400" /></Btn>
        <Btn>{c20(mag)}</Btn>
        <Btn>{c20(info)}</Btn>
      </div>
      <div className="pl-[9px] pt-[11px]"><Dots /></div>
      <div className="flex flex-col gap-[5px] pt-[5px]">
        <Btn>{c20(<>{mag}{P("M6.500 6.500h5v5h-5z", "#555", "none", 1.1)}</>)}</Btn>
        <Btn>{c20(<>{mag}{P("M6 9h6.500M8 7L6 9l2 2", G)}</>)}</Btn>
        <Btn>{c20(<>{mag}{P("M5.500 9H12M10 7l2 2-2 2", G)}</>)}</Btn>
        <Btn off><path d="M10 6v8l-6 4M10 14l6 4" stroke="#888" strokeWidth="1.500" /><path d="M22 17v4h-4z" fill="#777" /></Btn>
        <Btn><path d="M4 9h16v13H4zM8 9V6a4 4 0 0 1 8 0v3M6 9V5.500a6 6 0 0 1 12 0V9" stroke={K} strokeWidth="1.300" /><path d="M7 15.500c3-4 7-4 10 0-3 4-7 4-10 0z" stroke={G} strokeWidth="1.400" /><circle cx="12" cy="15.500" r="2" fill={G} /></Btn>
      </div>
    </div>
  );
}

function RightTools() {
  const eye = <><path d="M3.500 14c4-6 13-6 17 0-4 6-13 6-17 0zM12 7.500V4M6.500 9L4 6.500M17.500 9L20 6.500" stroke={K} strokeWidth="1.300" /></>;
  return (
    <div className="flex w-[41px] shrink-0 flex-col items-start bg-white pl-[6px] pt-[5px]">
      <div className="pl-[7px]"><Dots /></div>
      <div className="flex flex-col gap-[5px] pt-[5px]">
        <Btn><ellipse cx="12" cy="6" rx="8.500" ry="4" fill={G} stroke="#999" strokeWidth=".7" /><path d="M1 12h22" stroke="#777" /><ellipse cx="12" cy="17.500" rx="8.500" ry="4" fill="#e8cf92" /></Btn>
        <Btn><path d="M12 20c-1-8 5-13 10-12 1 6-3 13-10 12z" fill="#5c5c5c" /><ellipse cx="8" cy="12" rx="5" ry="9.500" fill={G} stroke="#999" strokeWidth=".7" /></Btn>
        <Btn><path d="M0 6l6-6M0 12L12 0M0 18L18 0M0 24L24 0M6 24L24 6M12 24l12-12M18 24l6-6M0 18l6 6M0 12l12 12M0 6l18 18M0 0l24 24M6 0l18 18M12 0l12 12" stroke="#bbb" strokeWidth=".9" /><ellipse cx="12" cy="12" rx="5.200" ry="9" fill={G} stroke="#888" strokeWidth=".7" /></Btn>
      </div>
      <div className="pl-[7px] pt-[11px]"><Dots /></div>
      <div className="flex flex-col gap-[5px] pt-[5px]">
        <Btn>{eye}<circle cx="12" cy="14" r="2.400" fill={G} /></Btn>
        <Btn>{eye}<circle cx="12" cy="14" r="2.400" stroke={K} /><path d="M5.500 20.500L19 7" stroke={G} strokeWidth="1.800" /></Btn>
        <Btn><path d="M2.500 3.500h15v15h-15z" stroke="#444" strokeWidth="1.700" /><path d="M6 7h15v14H6z" fill={G} /></Btn>
        <Btn><path d="M3.500 9V4h17v16H15" stroke={G} strokeWidth="1.300" strokeDasharray="1.500 1" /><path d="M3 12c7-1 10 2 10 9M5.500 9.500l-3 2.500 3 1.500" stroke="#333" strokeWidth="1.300" /></Btn>
      </div>
      <div className="pl-[7px] pt-[11px]"><Dots /></div>
      <div className="flex flex-col gap-[5px] pt-[5px]">
        <Btn><path d="M6 18V4.500h11" stroke={K} strokeWidth="2" /><path d="M9 7.500h9.500v12H9z" stroke={G} strokeWidth="1.200" /></Btn>
        <Btn><path d="M3.500 7.500h5.500l1.500-2h3l1.500 2h5.500v11.500h-17z" stroke={G} strokeWidth="1.200" /><circle cx="12" cy="12.500" r="3" fill={K} /></Btn>
      </div>
      <div className="pl-[7px] pt-[11px]"><Dots /></div>
      <div className="flex flex-col gap-[5px] pt-[5px]">
        <Btn off><path d="M5.500 5v14h14M5.500 19L16 11M4 7l1.500-2.500L7 7M18 17.500l2.500 1.500-2.500 1.500M13.500 10.500l3.500-.5-1 3" stroke="#888" strokeWidth="1.200" /></Btn>
        <Btn off><rect x="1" y="9.500" width="22" height="5" rx="2.500" fill="#eee" stroke="#999" /><rect x="2" y="10" width="10" height="4" fill="#aaa" /></Btn>
        <Btn off><path d="M4 4h12l4 4v12H4zM7 8.500h8M7 13h6M7 16.500h6" stroke="#888" strokeWidth="1.300" /></Btn>
        <Btn><path d="M3.500 7H9v11H3.500z" fill={K} /><path d="M8 8l3-2v10l-3 2zM8 6h4v10l-1 1" stroke={L} strokeWidth="1" /><path d="M14.500 10H22M14.500 14H22M16.500 8.500L14.500 10l2 1.500M16.500 12.500L14.500 14l2 1.500" stroke={K} strokeWidth="1.300" /></Btn>
      </div>
    </div>
  );
}

const profile = [
  [0, 0], [1, 0.002], [2, 0.00398], [3, 0.0059], [4, 0.00763], [5, 0.00911], [6, 0.01033], [7, 0.01126], [8, 0.01186],
  [9, 0.0122], [10, 0.01233], [11, 0.01222], [12, 0.01188], [13, 0.0113], [14, 0.01039], [15, 0.00916], [16, 0.00768],
  [17, 0.00598], [18, 0.004], [19, 0.00201], [20, 0],
];
const pts = profile.map(([y, u]) => [106 + u * 95720, 506 - y * 22.53]);
const curvePath = pts
  .map((p, i) => {
    if (!i) return `M${p[0]} ${p[1]}`;
    const a = pts[Math.max(0, i - 2)];
    const b = pts[i - 1];
    const d = pts[Math.min(pts.length - 1, i + 1)];
    return `C${b[0] + (p[0] - a[0]) / 6} ${b[1] + (p[1] - a[1]) / 6} ${p[0] - (d[0] - b[0]) / 6} ${p[1] - (d[1] - b[1]) / 6} ${p[0]} ${p[1]}`;
  })
  .join("");
const yl = ["0.00e+00", "2.00e+00", "4.00e+00", "6.00e+00", "8.00e+00", "1.00e+01", "1.20e+01", "1.40e+01", "1.60e+01", "1.80e+01", "2.00e+01"];
const xl = ["0", "0.002", "0.004", "0.006", "0.008", "0.01", "0.012", "0.014"];

function Plot() {
  return (
    <div className="relative h-[604px] bg-[linear-gradient(180deg,#ccd4e4_0%,#e7ebf5_60%,#eeeff3_70%,#ffffff_100%)]">
      <svg viewBox="0 0 1484 604" width="1484" height="604" className="block font-['Inter',sans-serif] text-[12.500px]">
        <g stroke="#6c6c70" strokeWidth="2" fill="none">
          <path d="M106 55v452M105 506h1342" />
          {yl.map((_, i) => <path key={i} d={`M101 ${506 - i * 45.06}h5`} stroke="#333" strokeWidth="1.200" />)}
          {yl.slice(1).map((_, i) => <path key={i} d={`M103.500 ${483.5 - i * 45.06}h3`} strokeWidth="1.500" />)}
          {xl.map((_, i) => <path key={i} d={`M${106 + i * 191.5} 506v5`} stroke="#333" strokeWidth="1.200" />)}
          {xl.slice(1).map((_, i) => <path key={i} d={`M${201.8 + i * 191.5} 506v3`} strokeWidth="1.500" />)}
        </g>
        <path d={curvePath} fill="none" stroke="#46d3b8" strokeWidth="2" />
        {yl.map((t, i) => <text key={t} x="101" y={511 - i * 45.1} textAnchor="end" textLength={i > 4 && i < 10 ? 54 : 57} lengthAdjust="spacing">{t}</text>)}
        {xl.map((t, i) => <text key={t} x={106 + i * 191.5} y="523" textAnchor="middle">{t}</text>)}
        <text x="776" y="543" textAnchor="middle" textLength="92">X Velocity [m/s]</text>
        <text transform="translate(34 281) rotate(-90)" textAnchor="middle" textLength="82">Position [mm]</text>
        <path d="M20 549h1444v41H20z" fill="none" stroke="#6c6c70" strokeWidth="2" />
        <path d="M706 570h13" stroke="#46d3b8" strokeWidth="1.800" />
        <text x="723" y="574" textLength="35">line-6</text>
        <path d="M1369 69L1381 44h7l-11.500 25z" fill="#000" />
        <path d="M1384.500 54L1389 44l9 25h-7.500z" fill="#000" />
        <text x="1398" y="68.500" fontSize="32" fontWeight="800" textLength="71" lengthAdjust="spacingAndGlyphs" className="font-['Open_Sans',sans-serif]">nsys</text>
        <text x="1407" y="90" fontSize="16" fontWeight="700" textLength="62" lengthAdjust="spacingAndGlyphs">2023 R2</text>
        <path d="M1368 96.500h99" stroke="#555" strokeWidth="1.500" />
        <text x="1375" y="117" fontSize="17.500" fontWeight="800" textLength="80" lengthAdjust="spacingAndGlyphs" className="font-['Open_Sans',sans-serif]">STUDENT</text>
        <path d="M1465 9.500l8 8M1473 9.500l-8 8" stroke="#111" strokeWidth="1.900" />
      </svg>
      <div className="absolute left-[5px] top-[4px]"><Swirl s={16} /></div>
      <div className="absolute inset-x-0 top-[4px] flex h-5 items-center justify-center text-[12.500px] font-bold text-[#2b3340]"><T w={65}>X Velocity</T></div>
    </div>
  );
}

function Console() {
  const lines: [string, number][] = [
    ["number tracked = 40000, escaped = 16530, incomplete = 23470", 472],
    ["number tracked = 40000, escaped = 3261, incomplete = 36739", 464],
    ["number tracked = 40000, escaped = 82, incomplete = 39918", 448],
    ["number tracked = 40000, escaped = 82, incomplete = 39918", 448],
  ];
  return (
    <div className="ml-[3px] flex h-[174px] flex-col bg-[#bfc4cc]">
      <div className="flex h-[27px] items-center pl-[9px] text-[13px] font-bold text-[#5d6f87]">
        <T w={50}>Console</T>
        <svg viewBox="0 0 11 11" width="11" height="11" className="-mt-1 ml-auto mr-[5px]" fill="none" stroke="#444"><rect x=".5" y=".5" width="10" height="10" rx="2" /><path d="M2.500 4.500h4v4h-4zM4.500 4.500v-2h4v4h-2" /></svg>
        <span className="-mt-1 mr-[3px] flex"><Chevron /></span>
      </div>
      <div className="ml-px flex h-[141px] rounded-l-md bg-[#f7f7f7]">
        <div className="pl-[7px] pt-[6px] text-[13.333px] text-black font-['Liberation_Mono',monospace]">
          {lines.map(([t, w], i) => (
            <div key={i} className="flex h-8 items-center"><T w={w}>{t}</T></div>
          ))}
        </div>
        <div className="-mt-px ml-auto flex gap-[5px]">
          <div className="flex h-6 w-7 items-center justify-center rounded-[3px] border border-[#b5b5b5] bg-[#fafafa]">
            <svg viewBox="0 0 16 16" width="15" height="15" fill="none"><path d="M8 2l6.500 12h-13z" stroke={L} strokeWidth="1.300" /><path d="M8 6v4M8 11.500v1.500" stroke="#777" strokeWidth="1.500" /></svg>
          </div>
          <div className="flex h-6 w-7 items-center justify-center rounded-[3px] border border-[#b5b5b5] bg-[#fafafa]">
            <svg viewBox="0 0 16 16" width="15" height="15" fill="none"><circle cx="8" cy="8" r="7" stroke="#777" strokeWidth="1.200" /><path d="M8 4v5M8 10.500v1.500" stroke={L} strokeWidth="1.500" /></svg>
          </div>
        </div>
        <div className="flex w-4 flex-col pr-px">
          <div className="flex h-5 items-center justify-center bg-[#9cabb4]"><Tri d={UP} /></div>
          <div className="h-[66px] bg-[#c1c9cf]" />
          <div className="h-5 bg-[#5b6172]" />
          <div className="flex h-5 items-center justify-center bg-[#9cabb4]"><Tri d={DOWN} /></div>
          <svg viewBox="0 0 14 14" width="13" height="14" className="ml-[2px] border border-[#a5a5a5] bg-white"><path d="M2 7l3.500 4L12 2" fill="none" stroke={K} strokeWidth="2.600" /></svg>
        </div>
      </div>
    </div>
  );
}

function Chrome({ s }: { s: number }) {
  return (
    <svg viewBox="0 0 24 24" width={s} height={s}>
      <circle cx="12" cy="12" r="12" fill="#2da94f" />
      <path d="M12 6.500h10.700A12 12 0 0 1 12 24l5-9z" fill="#fbc116" />
      <path d="M12 6.500h10.700A12 12 0 0 0 1.600 6L7 15z" fill="#e33b2e" />
      <circle cx="12" cy="12" r="5.800" fill="#fff" />
      <circle cx="12" cy="12" r="4.500" fill="#2f7de9" />
    </svg>
  );
}

function Taskbar() {
  const cell = "relative flex h-[40px] w-[44px] items-center justify-center";
  const dot = <span className="absolute bottom-0 left-[19px] h-[3px] w-[6px] rounded-full bg-[#9a9a9a]" />;
  return (
    <div className="flex h-12 items-center border-t border-[#3a3a3a] bg-[#1c1c1c]">
      <div className="flex w-[741px] shrink-0" />
      <div className="flex">
        <div className={cell}>
          <svg viewBox="0 0 24 24" width="24" height="24"><defs><linearGradient id="win" x1="0" y1="0" x2="1" y2="1"><stop offset="0" stopColor="#7fdcff" /><stop offset="1" stopColor="#0b9bf5" /></linearGradient></defs><path d="M.5.5h11v11H.5zM12.500.5h11v11h-11zM.5 12.500h11v11H.5zM12.500 12.500h11v11h-11z" fill="url(#win)" /></svg>
        </div>
        <div className={cell}>
          <svg viewBox="0 0 24 24" width="24" height="24"><defs><linearGradient id="edge" x1="0" y1="0" x2="1" y2="0.3"><stop offset="0" stopColor="#2aa7e0" /><stop offset="1" stopColor="#5fe06a" /></linearGradient></defs><circle cx="12" cy="12" r="12" fill="#1173c6" /><path d="M0 12C0 5 5 0 12 0s12 5 12 9.500-4 6.500-8 6.500c-3 0-2-2-1-4 0-4-3-5.500-6-5.500-4 0-8 2-9 5.500z" fill="url(#edge)" /><path d="M9 11c-2 5 2 10 8 10 2 0 4-1 5-2-3 6-12 7-16 1-2-4 0-8 3-9z" fill="#0c4a94" /><path d="M24 12c0 4-4 6-8 5.500-2 0-3-2-2-3.500 1 2 8 2 10-3z" fill="#1c1c1c" /></svg>
        </div>
        <div className={cell}><Chrome s={24} /></div>
        <div className={cell}>
          <svg viewBox="0 0 24 24" width="24" height="24"><path d="M0 2.500Q0 1 2 1h6l3 3H1z" fill="#d9960c" /><path d="M0 5.500l8 0 3-2h11q2 0 2 2V20q0 2-2 2H2q-2 0-2-2z" fill="#ffd158" /><path d="M4 22v-3.500Q4 16 6.500 16h11q2.500 0 2.500 2.500V22z" fill="#1479cf" /><path d="M8 19h8v1.200H8z" fill="#0c4f92" /></svg>
          {dot}
        </div>
        <div className={cell}>
          <svg viewBox="0 0 24 24" width="24" height="24"><defs><linearGradient id="ff" x1="1" y1="0" x2="0" y2="1"><stop offset="0" stopColor="#ffe14a" /><stop offset=".5" stopColor="#ff7a24" /><stop offset="1" stopColor="#f5245a" /></linearGradient></defs><path d="M15 0c1 3 3 4 5 5l1-1c2 3 3 6 2.500 10A11.500 11.500 0 0 1 1 13C.5 9 2 6 4 3.500l1 3C8 4 13 5 15 0z" fill="url(#ff)" /><circle cx="12.500" cy="13" r="5" fill="#7a4be0" /><path d="M4 8c4-1 6 1 8 1-1 2-4 2-3 4s4 2 5 1c-1 4-8 4-9-1z" fill="#ff9a2b" /></svg>
        </div>
        <div className={cell}>
          <div className="flex h-6 w-6 flex-col items-center bg-black">
            <svg viewBox="2 0 20 15" width="22" height="15"><Cubes /></svg>
            <span className="text-[10px] font-bold leading-[9px] text-white font-['Open_Sans',sans-serif]">WB</span>
          </div>
          {dot}
        </div>
        <div className={cell}>
          <svg viewBox="0 0 24 24" width="24" height="24"><path d="M2 1h18v23H2z" fill="#f4f6ee" /><path d="M3 15h16v8H3z" fill="#6fc21e" /><path d="M3 11h16v4H3z" fill="#d6efb0" /><path d="M2 2h18" stroke="#8a8a8a" strokeDasharray="1 1" strokeWidth="2" /><path d="M6 14V8h2v6M10 10h3M14 10h3" stroke="#222" strokeWidth="1.200" fill="none" /><path d="M22 2L14 17" stroke="#f0b22a" strokeWidth="2.500" /><path d="M23 0l-1.500 3" stroke="#b33" strokeWidth="2.500" /></svg>
          {dot}
        </div>
        <div className={cell}>
          <Chrome s={24} />
          <svg viewBox="0 0 16 16" width="17" height="17" className="absolute right-[5px] top-[1px] translate-x-1"><circle cx="8" cy="8" r="8" fill="#5d97dc" /><path d="M1 5q3-3 6-1t7 0v3H1z" fill="#dfeaf6" /><path d="M0 9c4-2 8 0 16-1a8 8 0 0 1-16 1z" fill="#55722f" /></svg>
          {dot}
        </div>
        <div className={cell}>
          <div className="absolute inset-x-[2px] inset-y-0 rounded-[4px] border border-[#333] bg-[#2a2a2a]" />
          <div className="relative h-6 w-6 bg-black">
            <Swirl s={24} f />
            <span className="absolute inset-x-0 bottom-0 text-center text-[10px] font-bold leading-[9px] text-white font-['Open_Sans',sans-serif]">F</span>
          </div>
          <span className="absolute bottom-0 left-[14px] h-[3px] w-4 rounded-full bg-[#4cc2ff]" />
        </div>
        <div className={cell}>
          <svg viewBox="0 0 24 24" width="24" height="24"><rect x="0" y="0" width="24" height="24" rx="4" fill="#2c2c2c" /><rect x="2.500" y="1" width="19" height="22" rx="2" fill="#141414" /><path d="M6 18V7l12 10V6" fill="none" stroke="#7b7b7b" strokeWidth="2.300" /></svg>
          {dot}
        </div>
      </div>
      <div className="ml-auto flex items-center text-[12px] leading-4 text-white font-['Open_Sans',sans-serif]">
        <svg viewBox="0 0 12 8" width="12" height="8" fill="none" stroke="#fff" strokeWidth="1.300"><path d="M1 7l5-5 5 5" /></svg>
        <Speaker className="ml-[18px]" />
        <div className="ml-[18px] flex w-[24px] flex-col items-center"><T w={23}>ENG</T><T w={12}>IN</T></div>
        <svg viewBox="0 0 16 12" width="16" height="12" fill="none" stroke="#fff" strokeWidth="1.200" className="ml-[18px]"><path d="M.8 4.500c4-4.500 10.400-4.500 14.400 0M3 7c3-3.200 7-3.200 10 0M5.200 9.200c1.600-1.700 4-1.700 5.600 0" /><circle cx="8" cy="10.500" r="1.200" fill="#fff" stroke="none" /></svg>
        <Speaker className="ml-[8px]" />
        <svg viewBox="0 0 17 14" width="17" height="14" className="ml-[7px]"><rect x="2.600" y="3.600" width="12" height="8" rx="1.500" fill="none" stroke="#fff" strokeWidth="1.200" /><path d="M6 5.500h7v4.500H4.500zM15.500 6h1v3h-1z" fill="#fff" /><path d="M3 0L1 5h3l-2 5" stroke="#fff" fill="none" strokeWidth="1.300" /></svg>
        <div className="ml-[17px] flex w-[62px] -translate-y-px flex-col items-end"><T w={28}>15:37</T><T w={62}>30-09-2023</T></div>
        <svg viewBox="0 0 14 16" width="14" height="16" className="ml-[8px] mr-[20px]"><path d="M7 0c3.500 0 5 2.500 5 5.500V10l2 2.500H0L2 10V5.500C2 2.500 3.500 0 7 0zM4.500 13.500h5Q7 17 4.500 13.500z" fill="#8fe3ff" /></svg>
      </div>
    </div>
  );
}

function Speaker({ className }: { className: string }) {
  return (
    <svg viewBox="0 0 17 14" width="17" height="14" fill="none" stroke="#fff" strokeWidth="1.200" className={className}>
      <path d="M1 5h2.500L7 2v10L3.500 9H1zM9 5c1 1.200 1 2.800 0 4M11.200 3.300c2 2.200 2 5.200 0 7.400M13.500 1.500c3 3.200 3 7.800 0 11" />
    </svg>
  );
}

export default function App() {
  return (
    <div className={"h-[1080px] w-[1920px] overflow-hidden bg-white leading-[1.200] " + fontUi}>
      <TopBar />
      <Tabs />
      <Ribbon />
      <div className="flex h-[823px] pt-[3px]">
        <Outline />
        <TaskPane />
        <div className="flex w-[1573px] flex-col bg-white">
          <div className="flex h-[604px]">
            <LeftTools />
            <div className="w-[1484px]"><Plot /></div>
            <RightTools />
          </div>
          <div className="flex h-[42px] items-center bg-white pt-[4px] text-[12.500px] text-black">
            <svg viewBox="0 0 5 18" width="5" height="18" className="-mt-1 ml-[8px]" fill="#b0b0b0">
              {[0, 3, 6, 9, 12, 15].map((y) => <path key={y} d={`M0 ${y}h1v1H0zM3 ${y}h1v1H3z`} />)}
            </svg>
            <T w={58} className="ml-auto">0 selected</T>
            <div className="ml-[2px] mr-[4px] flex h-[23px] w-[168px] items-center rounded-[4px] border border-[#b5bfd0] bg-[#fdfdfd] pl-[5px] pr-[8px]">
              all
              <Arrow className="ml-auto" />
            </div>
          </div>
          <Console />
        </div>
      </div>
      <Taskbar />
    </div>
  );
}
